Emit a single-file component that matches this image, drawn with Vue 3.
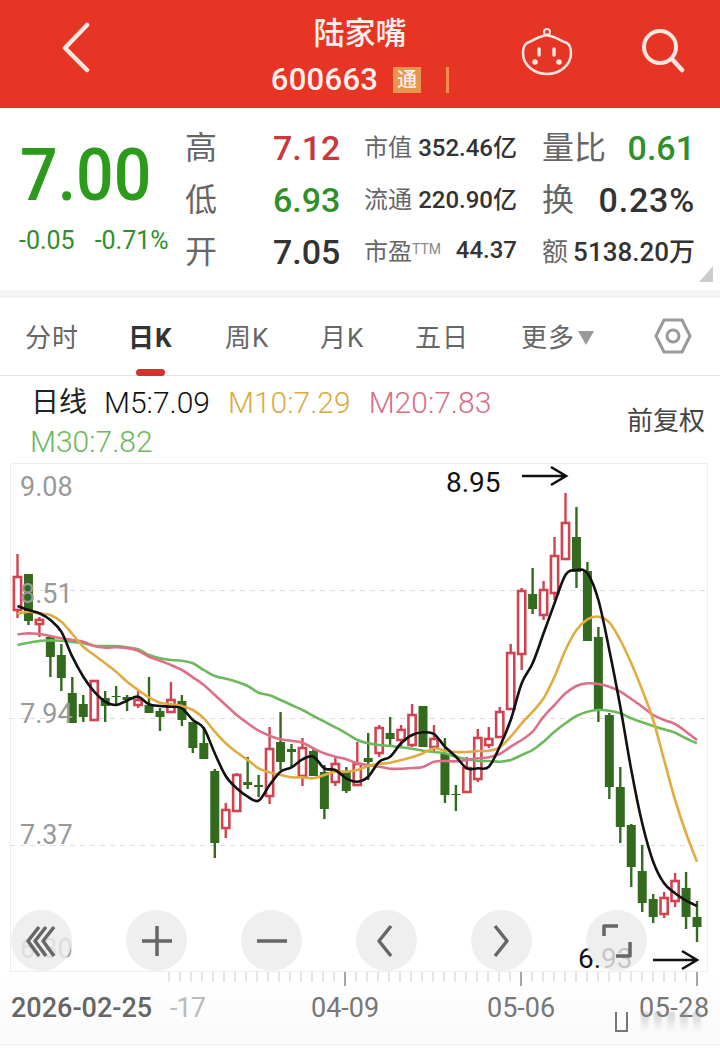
<template>
  <div class="page">
    <header class="topbar">
      <svg class="back" width="32" height="52" viewBox="0 0 32 52">
        <path d="M27 3 L5 26 L27 48" fill="none" stroke="#fbe6e0" stroke-width="4.5" stroke-linecap="round" stroke-linejoin="round" />
      </svg>
      <div class="title">
        <div class="name">陆家嘴</div>
        <div class="code">
          <span>600663</span>
          <span class="badge">通</span>
          <span class="divider"></span>
        </div>
      </div>
      <svg class="mascot" width="54" height="52" viewBox="0 0 54 52">
        <circle cx="27" cy="5" r="3" fill="none" stroke="#fbe6e0" stroke-width="2" />
        <path d="M23 9 C17 10 13 14 7 16 C4 18 3 22 3 26 C3 38 14 47 27 47 C40 47 51 38 51 26 C51 22 50 18 47 16 C41 14 36 10 30 9 C28 8 25 8 23 9 Z" fill="none" stroke="#fbe6e0" stroke-width="2.5" />
        <path d="M19 22 V28 M34 22 V28" stroke="#fbe6e0" stroke-width="3.5" stroke-linecap="round" />
        <circle cx="15" cy="35" r="2.8" fill="#fbe6e0" />
        <circle cx="39" cy="35" r="2.8" fill="#fbe6e0" />
      </svg>
      <svg class="search" width="44" height="46" viewBox="0 0 44 46">
        <circle cx="19" cy="19" r="16" fill="none" stroke="#fbe6e0" stroke-width="4" />
        <path d="M31 31 L41 42" stroke="#fbe6e0" stroke-width="4.5" stroke-linecap="round" />
      </svg>
    </header>

    <section class="quote">
      <div class="price">
        <div class="last">7.00</div>
        <div class="change">
          <span>-0.05</span>
          <span>-0.71%</span>
        </div>
      </div>
      <div class="stats">
        <template v-for="row in statRows" :key="row.label">
          <span class="big-label">{{ row.label }}</span>
          <span class="big-value" :class="row.tone">{{ row.value }}</span>
          <span class="pair">
            <span class="small-label">{{ row.midLabel }}<sup v-if="row.ttm">TTM</sup></span>
            <span class="small-value">{{ row.midValue }}</span>
          </span>
          <span class="pair">
            <span :class="row.smallRight ? 'small-label right-small' : 'big-label'">{{ row.rightLabel }}</span>
            <span :class="row.smallRight ? 'small-value right-small' : ['big-value', row.rightTone]">{{ row.rightValue }}</span>
          </span>
        </template>
      </div>
      <span class="corner"></span>
    </section>

    <div class="band"></div>

    <nav class="tabs">
      <span v-for="tab in tabs" :key="tab" class="tab" :class="{ active: tab === '日K' }">{{ tab }}</span>
      <span class="tab more">更多<i class="caret"></i></span>
      <svg class="hex" width="38" height="36" viewBox="0 0 38 36">
        <path d="M10 2 H28 L36 18 L28 34 H10 L2 18 Z" fill="none" stroke="#999" stroke-width="3" stroke-linejoin="round" />
        <circle cx="19" cy="18" r="6" fill="none" stroke="#999" stroke-width="3" />
      </svg>
    </nav>

    <div class="legend">
      <div class="lines">
        <span class="daily">日线</span>
        <span class="m5">M5:7.09</span>
        <span class="m10">M10:7.29</span>
        <span class="m20">M20:7.83</span>
        <span class="m30">M30:7.82</span>
      </div>
      <span class="adjust">前复权</span>
    </div>

    <div class="chart">
      <svg class="plot" width="698" height="509" viewBox="10 463 698 509">
        <line v-for="y in gridY" :key="y" x1="10" x2="708" :y1="y" :y2="y" stroke="#ddd" stroke-width="1" stroke-dasharray="5 5" />
        <g v-for="c in candles" :key="c.x">
          <line :x1="c.x" :x2="c.x" :y1="c.high" :y2="c.low" :stroke="c.color" stroke-width="2.4" />
          <rect v-if="c.up" :x="c.x - 3.6" :y="c.top" width="7.2" :height="c.h" fill="#fff" :stroke="c.color" stroke-width="2.6" />
          <rect v-else :x="c.x - 4.5" :y="c.top" width="9" :height="c.h" :fill="c.color" />
        </g>
        <path v-for="l in avgLines" :key="l.color" :d="l.d" fill="none" :stroke="l.color" :stroke-width="l.width" stroke-linejoin="round" />
        <text v-for="a in axisLabels" :key="a.text" class="axis" x="20" :y="a.y">{{ a.text }}</text>
        <text class="mark" x="446" y="492">8.95</text>
        <path d="M522 476 H566 M551 467 L566 476 L551 485" fill="none" stroke="#111" stroke-width="2.6" />
        <text class="mark" x="578" y="968">6.93</text>
        <path d="M653 960 H697 M682 951 L697 960 L682 969" fill="none" stroke="#111" stroke-width="2.6" />
      </svg>
      <div class="controls">
        <button v-for="b in buttons" :key="b" class="ctrl">
          <svg width="40" height="40" viewBox="0 0 40 40">
            <path :d="b" fill="none" stroke="#666" stroke-width="3.5" stroke-linejoin="round" />
          </svg>
        </button>
      </div>
    </div>

    <div class="footer">
      <svg class="ticks" width="540" height="14" viewBox="0 0 540 14">
        <line v-for="t in ticks" :key="t.x" :x1="t.x" :x2="t.x" y1="0" :y2="t.major ? 14 : 10" :stroke="t.major ? '#888' : '#ddd'" stroke-width="1.5" />
      </svg>
      <div class="dates">
        <span class="first">2026-02-25</span>
        <span class="faded">-17</span>
        <span class="d1">04-09</span>
        <span class="d2">05-06</span>
        <span class="d3">05-28</span>
      </div>
      <!-- watermark smear -->
      <div class="smear">
        <i class="blot u"></i>
        <i v-for="n in 5" :key="n" class="blot"></i>
      </div>
    </div>
  </div>
</template>

<script setup>
const statRows = [
  { label: '高', value: '7.12', tone: 'red', midLabel: '市值', midValue: '352.46亿', rightLabel: '量比', rightValue: '0.61', rightTone: 'green' },
  { label: '低', value: '6.93', tone: 'green', midLabel: '流通', midValue: '220.90亿', rightLabel: '换', rightValue: '0.23%', rightTone: 'dark wide' },
  { label: '开', value: '7.05', tone: 'dark', midLabel: '市盈', ttm: true, midValue: '44.37', rightLabel: '额', rightValue: '5138.20万', smallRight: true },
]

const tabs = ['分时', '日K', '周K', '月K', '五日']

const gridY = [590.5, 718.5, 845.5]

const axisLabels = [
  { text: '9.08', y: 496 },
  { text: '8.51', y: 603 },
  { text: '7.94', y: 723 },
  { text: '7.37', y: 844 },
  { text: '6.80', y: 958 },
]

// high, body top, body bottom, low, rising
const rawCandles = [
  [554, 577, 610, 618, 1], [574, 574, 621, 625, 0], [617, 620, 624, 637, 1], [637, 637, 657, 677, 0],
  [644, 655, 678, 691, 0], [677, 693, 723, 723, 0], [695, 704, 717, 722, 0], [680, 681, 720, 721, 1],
  [691, 698, 706, 722, 0], [686, 696, 697, 705, 0], [695, 697, 700, 711, 0], [691, 700, 705, 708, 1],
  [677, 705, 713, 713, 0], [708, 711, 717, 731, 0], [682, 700, 712, 712, 1], [695, 701, 720, 726, 0],
  [722, 722, 748, 753, 0], [727, 743, 759, 759, 0], [769, 771, 843, 858, 0], [803, 810, 828, 838, 1],
  [773, 775, 811, 811, 1], [757, 782, 785, 789, 0], [775, 785, 787, 797, 0], [727, 749, 796, 804, 1],
  [712, 742, 762, 770, 0], [744, 749, 752, 767, 0], [738, 748, 776, 786, 1], [747, 751, 776, 776, 0],
  [765, 772, 809, 819, 0], [758, 764, 782, 786, 1], [767, 772, 791, 793, 0], [742, 764, 785, 786, 1],
  [733, 758, 762, 780, 0], [725, 728, 753, 757, 1], [717, 733, 739, 747, 0], [725, 730, 740, 747, 1],
  [704, 715, 745, 747, 1], [706, 706, 747, 747, 0], [725, 739, 747, 753, 1], [738, 753, 795, 803, 0],
  [785, 794, 795, 811, 0], [757, 768, 792, 793, 1], [729, 738, 779, 782, 1], [727, 739, 745, 748, 1],
  [707, 712, 737, 738, 1], [644, 653, 709, 710, 1], [588, 591, 654, 670, 1], [568, 594, 609, 614, 0],
  [581, 590, 615, 620, 1], [537, 556, 593, 600, 1], [493, 523, 559, 559, 1], [507, 537, 572, 588, 0],
  [562, 571, 641, 641, 0], [627, 637, 710, 722, 0], [713, 715, 787, 799, 0], [767, 787, 827, 843, 0],
  [824, 825, 867, 887, 0], [845, 871, 903, 912, 0], [894, 899, 917, 923, 0], [892, 898, 914, 918, 1],
  [873, 881, 901, 907, 1], [872, 888, 917, 929, 0], [901, 917, 927, 942, 0],
]

const xAt = (i) => 17.5 + i * 10.96

const candles = rawCandles.map(([high, top, bottom, low, up], i) => ({
  x: xAt(i),
  high,
  low,
  top,
  h: bottom - top,
  up: !!up,
  color: up ? '#cf4450' : '#336b1e',
}))

// moving averages, y read at 3x from y=460
const m5 = [438, 450, 460, 480, 515, 590, 650, 695, 725, 735, 722, 710, 733, 738, 740, 745, 780, 805, 880, 948, 985, 1010, 1022, 975, 935, 922, 898, 890, 925, 930, 955, 965, 950, 905, 890, 850, 825, 817, 822, 860, 890, 925, 925, 920, 860, 780, 670, 610, 520, 430, 345, 330, 340, 420, 570, 740, 930, 1090, 1205, 1270, 1300, 1322, 1338]
const m10 = [462, 455, 460, 465, 485, 522, 560, 585, 610, 635, 665, 690, 712, 728, 733, 738, 750, 775, 815, 850, 877, 900, 925, 937, 945, 952, 952, 955, 945, 935, 935, 930, 918, 912, 908, 900, 892, 880, 865, 872, 876, 876, 873, 872, 862, 830, 790, 755, 715, 650, 570, 510, 478, 470, 487, 540, 610, 690, 780, 900, 1020, 1120, 1205]
const m20 = [523, 520, 522, 528, 535, 540, 545, 558, 563, 562, 565, 572, 590, 602, 615, 630, 652, 675, 705, 735, 765, 790, 812, 827, 838, 842, 848, 865, 880, 890, 898, 910, 915, 920, 926, 926, 924, 921, 905, 903, 904, 900, 895, 892, 882, 860, 840, 815, 770, 735, 700, 678, 670, 672, 680, 695, 717, 740, 765, 780, 792, 815, 840]
const m30 = [555, 548, 543, 541, 542, 546, 550, 557, 558, 558, 562, 568, 585, 595, 600, 602, 610, 630, 648, 656, 665, 678, 698, 706, 720, 735, 750, 768, 785, 802, 820, 840, 850, 855, 858, 862, 866, 872, 876, 880, 890, 898, 903, 903, 905, 900, 885, 870, 845, 815, 790, 768, 755, 750, 752, 760, 775, 787, 798, 808, 818, 835, 850]

const smooth = (vals) => {
  const p = vals.map((v, i) => [xAt(i), 460 + v / 3])
  let d = `M${p[0][0]} ${p[0][1].toFixed(1)}`
  for (let i = 0; i < p.length - 1; i++) {
    const a = p[i - 1] || p[i]
    const b = p[i]
    const c = p[i + 1]
    const e = p[i + 2] || c
    const c1 = [b[0] + (c[0] - a[0]) / 6, b[1] + (c[1] - a[1]) / 6]
    const c2 = [c[0] - (e[0] - b[0]) / 6, c[1] - (e[1] - b[1]) / 6]
    d += ` C${c1[0].toFixed(1)} ${c1[1].toFixed(1)} ${c2[0].toFixed(1)} ${c2[1].toFixed(1)} ${c[0].toFixed(1)} ${c[1].toFixed(1)}`
  }
  return d
}

const avgLines = [
  { color: '#6cba5c', width: 2.6, d: smooth(m30) },
  { color: '#dd6f88', width: 2.6, d: smooth(m20) },
  { color: '#e2ab42', width: 2.6, d: smooth(m10) },
  { color: '#111', width: 2.6, d: smooth(m5) },
]

const buttons = [
  'M17 6 L6 20 L17 35 M24 6 L13 20 L24 35 M32 6 L21 20 L32 35',
  'M20 5 V35 M5 20 H35',
  'M5 20 H35',
  'M24 5 L12 20 L24 35',
  'M13 5 L25 20 L13 35',
  'M7 15 V5 H21 M19 20 M33 21 V35 H19',
]

const ticks = Array.from({ length: 49 }, (_, i) => ({
  x: 1 + i * 11,
  major: i === 16 || i === 32 || i === 48,
}))
</script>

<style scoped>
.page {
  width: 720px;
  height: 1048px;
  overflow: hidden;
  background: #fff;
  font-family: Roboto, "Noto Sans CJK SC", sans-serif;
  color: #333;
}

.topbar {
  height: 108px;
  background: #e73525;
  color: #fdf0ec;
  display: flex;
  align-items: center;
  padding-left: 60px;
  box-sizing: border-box;
}

.back {
  margin-top: -12px;
}

.title {
  width: 300px;
  margin-left: 118px;
  text-align: center;
}

.name {
  font-size: 31px;
  line-height: 34px;
  font-weight: 500;
  margin-top: 8px;
}

.code {
  display: flex;
  justify-content: center;
  align-items: center;
  font-size: 31px;
  font-weight: 500;
  line-height: 40px;
  margin-top: 9px;
  letter-spacing: 0.3px;
}

.badge {
  width: 28px;
  height: 26px;
  margin-left: 15px;
  background: #e8954f;
  font-size: 20px;
  line-height: 26px;
  text-align: center;
}

.divider {
  width: 3px;
  height: 26px;
  margin-left: 25px;
  background: #ee8e4f;
}

.mascot {
  margin-left: 10px;
  margin-top: -2px;
}

.search {
  margin-left: 67px;
  margin-top: -6px;
}

.quote {
  position: relative;
  height: 182px;
  display: flex;
}

.price {
  width: 185px;
  padding-left: 20px;
  box-sizing: border-box;
}

.last {
  font-size: 72px;
  font-weight: 500;
  line-height: 80px;
  margin-top: 28px;
  color: #2c9a1a;
  transform: scaleX(0.92);
  transform-origin: left center;
}

.change {
  display: flex;
  gap: 20px;
  margin-top: 11px;
  margin-left: -1px;
  font-size: 25px;
  line-height: 28px;
  color: #2e8f2b;
  white-space: nowrap;
}

.stats {
  width: 511px;
  display: grid;
  grid-template-columns: 88px 91px 178px 154px;
  grid-auto-rows: 52px;
  align-items: center;
  padding-top: 14px;
}

.big-label {
  font-size: 32px;
  line-height: 52px;
  color: #666;
}

.big-value {
  font-size: 34px;
  font-weight: 500;
  line-height: 52px;
}

.red {
  color: #c9383f;
}

.green {
  color: #2e8f2b;
}

.dark {
  color: #333;
}

.wide {
  letter-spacing: 0.8px;
}

.pair {
  display: flex;
  justify-content: space-between;
  align-items: center;
  width: 153px;
}

.small-label {
  font-size: 24px;
  color: #666;
  white-space: nowrap;
  margin-bottom: 5px;
}

.small-label sup {
  font-size: 14px;
  color: #888;
  vertical-align: 6px;
  line-height: 0;
}

.small-value {
  font-size: 24px;
  font-weight: 500;
  color: #333;
  white-space: nowrap;
  margin-bottom: 5px;
}

.small-label.right-small {
  font-size: 26px;
}

.small-value.right-small {
  font-size: 26px;
}

.corner {
  position: absolute;
  right: 7px;
  bottom: 8px;
  width: 0;
  height: 0;
  border-left: 14px solid transparent;
  border-bottom: 16px solid #ccc;
}

.band {
  height: 8px;
  background: #f4f4f4;
}

.tabs {
  position: relative;
  height: 78px;
  border-bottom: 1px solid #e4e4e4;
  box-sizing: border-box;
  display: flex;
  align-items: center;
  gap: 47px;
  padding-left: 25px;
}

.tab {
  min-width: 48px;
  font-size: 26px;
  color: #666;
  white-space: nowrap;
  line-height: 78px;
  margin-top: 2px;
  position: relative;
  letter-spacing: 1px;
}

.tab.active {
  min-width: 50px;
  font-weight: 700;
  color: #333;
  margin-left: 2px;
}

.tab.active::after {
  content: "";
  position: absolute;
  left: 8px;
  bottom: 1px;
  width: 29px;
  height: 7px;
  border-radius: 4px;
  background: #d2322d;
}

.more {
  display: flex;
  align-items: center;
  margin-left: 5px;
}

.caret {
  width: 0;
  height: 0;
  margin-left: 3px;
  border-left: 8px solid transparent;
  border-right: 8px solid transparent;
  border-top: 14px solid #999;
}

.hex {
  position: absolute;
  left: 654px;
  top: 20px;
}

.legend {
  height: 86px;
  display: flex;
  justify-content: space-between;
  padding: 9px 15px 0 30px;
  box-sizing: border-box;
}

.lines {
  width: 510px;
  font-size: 30px;
  line-height: 35px;
  font-weight: 300;
  display: flex;
  flex-wrap: wrap;
  column-gap: 18px;
}

.daily {
  color: #222;
  font-weight: 400;
  font-size: 28px;
  margin-left: 1px;
  margin-right: -1px;
}

.m5 {
  color: #111;
}

.m10 {
  color: #dcaa42;
}

.m20 {
  color: #d96d85;
}

.m30 {
  color: #6cb85c;
  width: 100%;
}

.adjust {
  font-size: 26px;
  color: #444;
  line-height: 72px;
}

.chart {
  position: relative;
  width: 698px;
  height: 509px;
  margin-left: 10px;
  border: 1px solid #eee;
  box-sizing: border-box;
  margin-top: 1px;
}

.plot {
  position: absolute;
  left: -1px;
  top: -1px;
  overflow: visible;
}

.axis {
  font-size: 27px;
  fill: #999;
  font-family: Roboto, sans-serif;
}

.mark {
  font-size: 28px;
  fill: #111;
  font-family: Roboto, sans-serif;
}

.controls {
  position: absolute;
  left: 0;
  bottom: 0;
  display: flex;
  gap: 54px;
}

.ctrl {
  width: 61px;
  height: 61px;
  padding: 0;
  border: none;
  border-radius: 50%;
  background: rgba(236, 236, 236, 0.82);
  display: flex;
  align-items: center;
  justify-content: center;
}

.footer {
  position: relative;
  height: 72px;
  border-bottom: 1px solid #eee;
  background: linear-gradient(#fff, #fafafa);
}

.ticks {
  display: block;
  margin-left: 168px;
}

.dates {
  display: flex;
  font-size: 27px;
  line-height: 36px;
  color: #777;
  margin-top: 4px;
  padding-left: 11px;
  white-space: nowrap;
}

.first {
  width: 159px;
  font-weight: 500;
  color: #666;
}

.faded {
  width: 141px;
  color: #bbb;
  letter-spacing: -1px;
}

.d1 {
  width: 176px;
}

.d2 {
  width: 152px;
}

.d3 {
  letter-spacing: 0.5px;
}

.smear {
  position: absolute;
  left: 615px;
  top: 40px;
  display: flex;
  gap: 5px;
  align-items: flex-end;
}

.blot {
  width: 8px;
  height: 20px;
  background: linear-gradient(rgba(150, 150, 150, 0.4), rgba(150, 150, 150, 0));
  filter: blur(1px);
}

.blot.u {
  width: 13px;
  height: 20px;
  margin-right: 8px;
  border: 2px solid #777;
  border-top: none;
  background: none;
  box-sizing: border-box;
  filter: blur(0.6px);
}
</style>

<style>
html,
body {
  margin: 0;
  background: #fff;
}
</style>
